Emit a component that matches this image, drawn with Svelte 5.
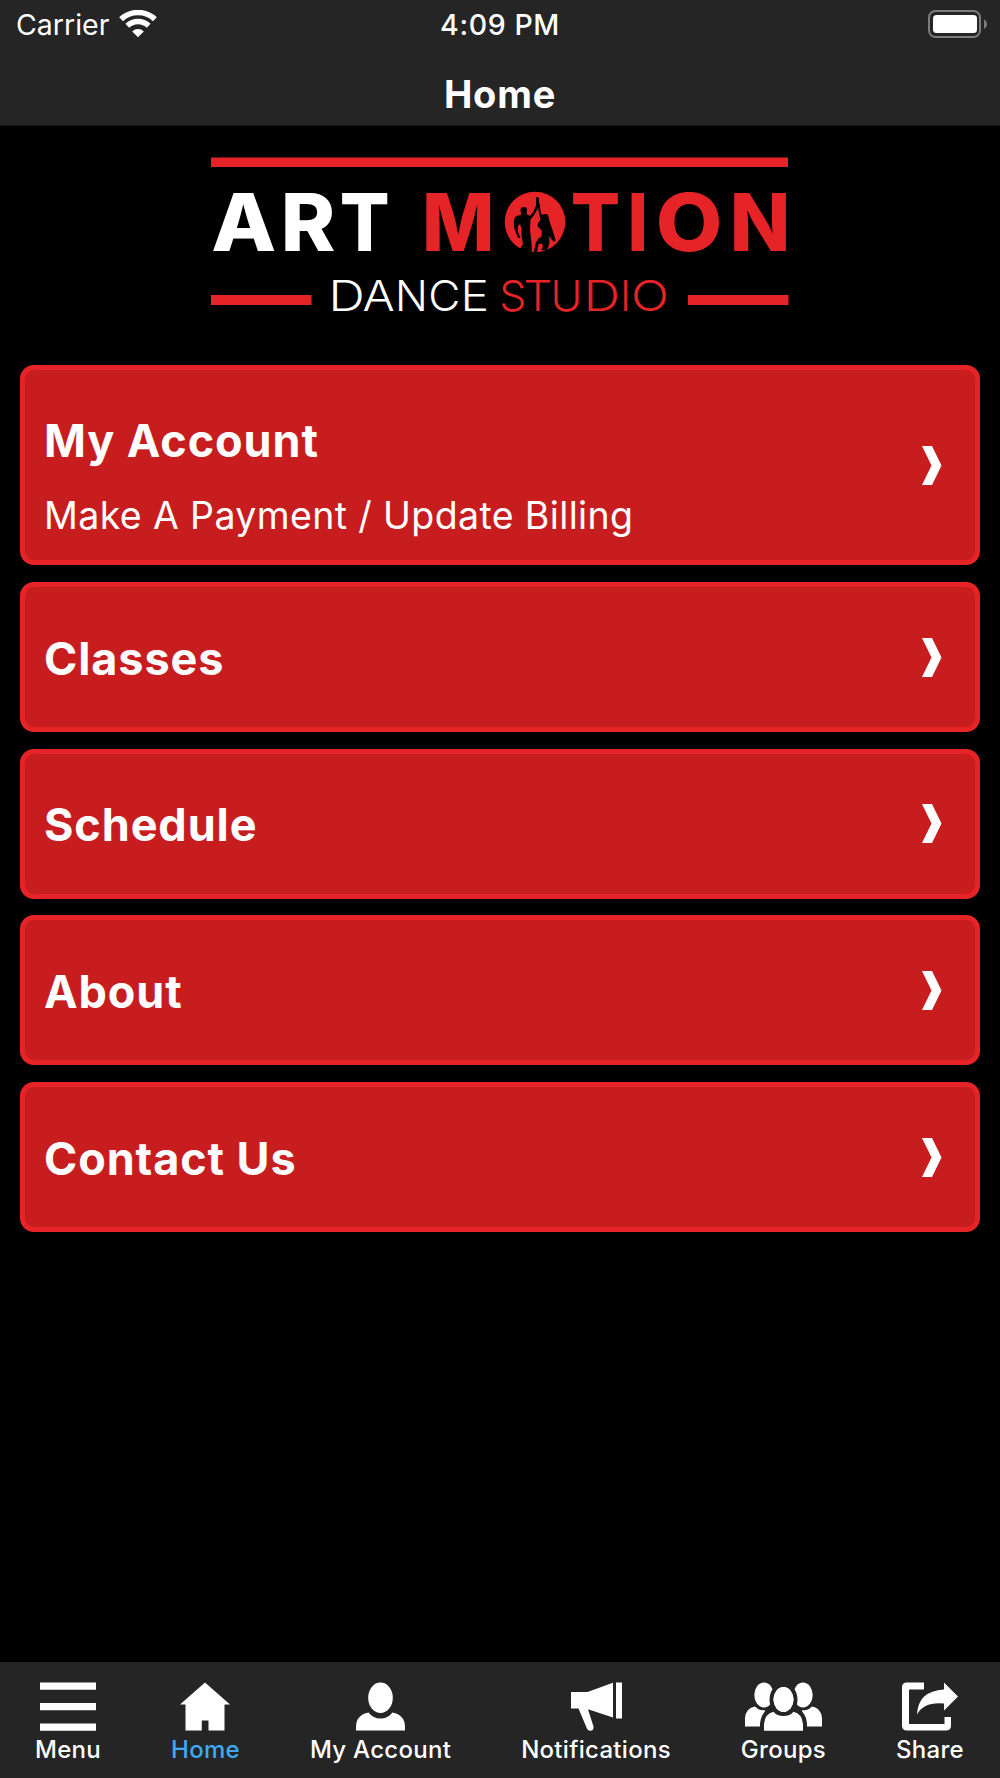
<script>
  const cards = [
    { title: 'My Account', text: 'Make A Payment / Update Billing' },
    { title: 'Classes' },
    { title: 'Schedule' },
    { title: 'About' },
    { title: 'Contact Us' }
  ];

  const tabs = [
    { label: 'Menu', icon: 'menu', width: 56 },
    { label: 'Home', icon: 'home', width: 50, active: true },
    { label: 'My Account', icon: 'account', width: 49 },
    { label: 'Notifications', icon: 'notifications', width: 51 },
    { label: 'Groups', icon: 'groups', width: 77 },
    { label: 'Share', icon: 'share', width: 56 }
  ];

  // logo letters: [letter, x, horizontal stretch]
  const logo = [
    { size: 'big', color: '#fff', y: 251.3, letters: [['A', 211.2, 1.066], ['R', 280.8, 1.042], ['T', 339.7, 0.93]] },
    { size: 'big', color: '#e62326', y: 251.3, letters: [['M', 422.1, 0.97]] },
    { size: 'big', color: '#e62326', y: 251.3, letters: [['T', 570.7, 0.923], ['I', 627.6, 0.91], ['O', 655.8, 1.09], ['N', 729.8, 1]] },
    { size: 'small', color: '#fff', y: 311, letters: [['D', 328.6, 1.2], ['A', 362.6, 1.14], ['N', 395, 1.03], ['C', 428.2, 1.05], ['E', 460.5, 1.14]] },
    { size: 'small', color: '#e62326', y: 311, letters: [['S', 499.3, 1.02], ['T', 523.4, 1.07], ['U', 550.6, 1.03], ['D', 583.8, 1.2], ['I', 620, 1], ['O', 630.9, 1.19]] }
  ];
</script>

<div class="app">
  <header>
    <div class="status">
      <div class="carrier">
        <span>Carrier</span>
        <svg width="38" height="28" viewBox="0 0 38 28">
          <g fill="none" stroke="#fff">
            <path d="M2.1 9.3A24.5 24.5 0 0 1 35.9 9.3" stroke-width="5.6" />
            <path d="M8.3 15.8A15.6 15.6 0 0 1 29.7 15.8" stroke-width="5.4" />
          </g>
          <path d="M19 27.2L13.2 21.4A8.4 8.4 0 0 1 24.8 21.4Z" fill="#fff" />
        </svg>
      </div>
      <span class="time">4:09 PM</span>
      <svg class="battery" width="60" height="28" viewBox="0 0 60 28">
        <rect x="1" y="1" width="51" height="26" rx="6.5" fill="none" stroke="#7c7c7c" stroke-width="2" />
        <rect x="5" y="5" width="44" height="18" rx="3.5" fill="#fff" />
        <path d="M56 9.5Q59 11 59 14.3Q59 17.5 56 19Z" fill="#7c7c7c" />
      </svg>
    </div>
    <h1>Home</h1>
  </header>

  <main>
    <svg class="logo" width="578" height="160" viewBox="211 155 578 160">
      <g fill="#e62326">
        <rect x="211" y="157.5" width="577" height="9.5" />
        <rect x="211" y="295" width="100.5" height="10" />
        <rect x="688" y="295" width="100.5" height="10" />
        <circle cx="535" cy="222" r="30.3" />
      </g>
      {#each logo as word}
        <g class={word.size} fill={word.color}>
          {#each word.letters as [letter, x, stretch]}
            <text transform="translate({x} {word.y}) scale({stretch} 1)">{letter}</text>
          {/each}
        </g>
      {/each}
      <!-- dancing couple -->
      <g fill="#000">
        <path
          d="M520.5 209Q521 207 524 207Q527 207 527 210L526.5 214L530 216Q534 212 536 205.500L536 197.500Q538 196 539 198.500L539 205Q537 212 530.500 219.500L530 230L531.500 243L532 252.500L524 252L520 249L523 244L521.500 235L521.500 228L520 224L518 226L518 232L520.500 238L518 238L514.500 229Q513 222 515 217Q517 215.500 521 215Z"
        />
        <path
          d="M537 204L539.500 203L541 213.500L543 215Q545 213 548 215L550 223L552.500 230L555.500 240Q555 243 552.500 240.500L549 236L549.500 243L547 250.500L541 250Q544 247 542 243.500L538.500 244L537 252.500H533.500L535.500 245Q535.500 240 541.500 236.500L542 231L537.500 226Q538 222 540.500 220Z"
        />
      </g>
    </svg>

    <div class="cards">
      {#each cards as card}
        <section class="card" class:tall={card.text}>
          <div class="body">
            <h2>{card.title}</h2>
            {#if card.text}
              <p>{card.text}</p>
            {/if}
          </div>
          <svg class="arrow" width="20" height="39" viewBox="0 0 20 39">
            <path d="M0 0H10L19.5 19.5L10 39H0L9.5 19.5Z" fill="#fff" />
          </svg>
        </section>
      {/each}
    </div>
  </main>

  <nav>
    {#each tabs as tab}
      <div class="tab" class:active={tab.active}>
        <svg width={tab.width} height="49" viewBox="0 0 {tab.width} 49" fill="#fff">
          {#if tab.icon === 'menu'}
            <path d="M0 .5H56V7.800H0ZM0 21H56V28.300H0ZM0 41.500H56V48.800H0Z" />
          {:else if tab.icon === 'home'}
            <path d="M25 .5L50 22.500H44.500V48.500H28.500V38.500H21.800V48.500H5.500V22.500H0Z" />
          {:else if tab.icon === 'account'}
            <ellipse cx="24.5" cy="15.7" rx="12.3" ry="15.3" />
            <path d="M0 48.500V45Q0 33 12.500 30.500Q17 36.500 24.500 36.500Q32 36.500 36.500 30.500Q49 33 49 45V48.500Z" />
          {:else if tab.icon === 'notifications'}
            <path d="M0 10H16.500L42 .8V35.500L17 27.200L22.500 44.500Q23 48.500 19.500 48.800Q17 49 15.800 46.300L7.500 26.500H0Z" />
            <path d="M45 .5H51V36.500H45Z" />
          {:else if tab.icon === 'groups'}
            <ellipse cx="19" cy="13" rx="9.7" ry="12.5" />
            <ellipse cx="58" cy="13" rx="9.7" ry="12.5" />
            <path d="M0 44.500V36Q1 26 10 24.500Q14 29 20 28L17 44.500Z" />
            <path d="M77 44.500V36Q76 26 67 24.500Q63 29 57 28L60 44.500Z" />
            <g stroke="#252525" stroke-width="8" paint-order="stroke">
              <ellipse cx="38.5" cy="17.5" rx="10" ry="12.5" />
              <path d="M19 48.700V42Q20 31.500 28.500 29.700Q32 34 38.500 34Q45 34 48.500 29.700Q57 31.500 58 42V48.700Z" />
            </g>
            <ellipse cx="38.5" cy="17.5" rx="10" ry="12.5" />
          {:else}
            <path d="M22 .5H5Q0 .5 0 5.500V43.500Q0 48.500 5 48.500H44Q49 48.500 49 43.500V35H42.500V42H7V7.500H22Z" />
            <path d="M42 .5L56 14.500L42 28.500V21.500Q22 19.500 15 32.500Q16 9 42 7.500Z" />
          {/if}
        </svg>
        <span class="label">{tab.label}</span>
      </div>
    {/each}
  </nav>
</div>

<style>
  :global(body) {
    margin: 0;
    background: #000;
  }

  .app {
    width: 1000px;
    height: 1778px;
    display: flex;
    flex-direction: column;
    overflow: hidden;
    background: #000;
    color: #fff;
    font-family: Inter, 'Liberation Sans', sans-serif;
  }

  header {
    height: 125px;
    background: #252525;
    border-bottom: 1px solid #161616;
  }

  .status {
    display: grid;
    grid-template-columns: 1fr auto 1fr;
    align-items: center;
    height: 48px;
    padding: 0 12px;
    font-size: 28.5px;
    line-height: 46px;
  }

  .carrier {
    display: flex;
    align-items: center;
    gap: 10px;
    padding-left: 4px;
  }

  .carrier span,
  .time {
    padding-top: 2px;
  }

  .time {
    font-weight: 500;
    letter-spacing: 0.6px;
  }

  .battery {
    justify-self: end;
  }

  h1 {
    margin: 0;
    font-size: 38px;
    font-weight: 700;
    letter-spacing: 0.8px;
    line-height: 92px;
    text-align: center;
  }

  main {
    flex: 1;
    display: flex;
    flex-direction: column;
    padding: 29px 20px 0;
  }

  .logo {
    align-self: center;
    overflow: visible;
  }

  .big {
    font-size: 79.2px;
    font-weight: 800;
  }

  .small {
    font-size: 42px;
    font-weight: 300;
  }

  .cards {
    display: flex;
    flex-direction: column;
    gap: 16.67px;
    margin-top: 50.4px;
  }

  .card {
    display: flex;
    align-items: center;
    justify-content: space-between;
    height: 150px;
    padding: 0 33px 0 19px;
    box-sizing: border-box;
    border: 5px solid #e62326;
    border-radius: 14px;
    background: #c81d1f;
  }

  .card.tall {
    height: 200px;
  }

  .body {
    padding-top: 3px;
  }

  .tall .body {
    padding-top: 24px;
  }

  h2 {
    margin: 0;
    font-size: 45px;
    font-weight: 700;
    letter-spacing: 0.9px;
    line-height: 56px;
  }

  p {
    margin: 21px 0 0;
    font-size: 37.5px;
    letter-spacing: 0.37px;
    line-height: 52px;
  }

  nav {
    display: flex;
    justify-content: space-between;
    height: 116px;
    padding: 20px 36px 0 35px;
    box-sizing: border-box;
    background: #252525;
  }

  .tab {
    display: flex;
    flex-direction: column;
    align-items: center;
  }

  .label {
    font-size: 24px;
    font-weight: 500;
    letter-spacing: 0.3px;
    line-height: 38px;
  }

  .active .label {
    color: #3fa9f5;
  }
</style>
